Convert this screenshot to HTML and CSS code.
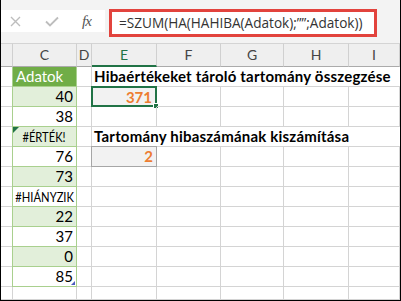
FILE: index.html
```html
<!DOCTYPE html>
<html lang="hu">
<head>
  <meta charset="UTF-8" />
  <title>HAHIBA összegzés</title>
  <link rel="stylesheet" href="styles.css">
</head>
<body>
  <div class="window">

    <!-- Formula bar -->
    <div class="formula-area">
      <div class="name-box">
        <span class="icon cancel">
          <svg width="11" height="11" viewBox="0 0 11 11"><path d="M1 1 L10 10 M10 1 L1 10" stroke="#bdbdbd" stroke-width="1.4" fill="none"/></svg>
        </span>
        <span class="icon enter">
          <svg width="14" height="11" viewBox="0 0 14 11"><path d="M1 5.5 L5 9.5 L13 1.5" stroke="#bdbdbd" stroke-width="1.8" fill="none"/></svg>
        </span>
        <span class="fx">fx</span>
      </div>
      <div class="formula">=SZUM(HA(HAHIBA(Adatok);””;Adatok))</div>
    </div>

    <!-- Sheet -->
    <div class="sheet">
      <div class="hd"></div>
      <div class="hd">C</div>
      <div class="hd">D</div>
      <div class="hd active">E</div>
      <div class="hd">F</div>
      <div class="hd">G</div>
      <div class="hd">H</div>
      <div class="hd">I</div>

      <div class="c rh"></div>
      <div class="c tbl th">Adatok</div>
      <div class="c"></div>
      <div class="c title">Hibaértékeket tároló tartomány összegzése</div>

      <div class="c rh"></div>
      <div class="c tbl band num">40</div>
      <div class="c"></div>
      <div class="c res selected">371<span class="handle"></span></div>
      <div class="c"></div><div class="c"></div><div class="c"></div><div class="c"></div>

      <div class="c rh"></div>
      <div class="c tbl num">38</div>
      <div class="c"></div><div class="c"></div><div class="c"></div><div class="c"></div><div class="c"></div><div class="c"></div>

      <div class="c rh"></div>
      <div class="c tbl band err flag"><span>#ÉRTÉK!</span></div>
      <div class="c"></div>
      <div class="c title">Tartomány hibaszámának kiszámítása</div>

      <div class="c rh"></div>
      <div class="c tbl num">76</div>
      <div class="c"></div>
      <div class="c res boxed">2</div>
      <div class="c"></div><div class="c"></div><div class="c"></div><div class="c"></div>

      <div class="c rh"></div>
      <div class="c tbl band num">73</div>
      <div class="c"></div><div class="c"></div><div class="c"></div><div class="c"></div><div class="c"></div><div class="c"></div>

      <div class="c rh"></div>
      <div class="c tbl err"><span>#HIÁNYZIK</span></div>
      <div class="c"></div><div class="c"></div><div class="c"></div><div class="c"></div><div class="c"></div><div class="c"></div>

      <div class="c rh"></div>
      <div class="c tbl band num">22</div>
      <div class="c"></div><div class="c"></div><div class="c"></div><div class="c"></div><div class="c"></div><div class="c"></div>

      <div class="c rh"></div>
      <div class="c tbl num">37</div>
      <div class="c"></div><div class="c"></div><div class="c"></div><div class="c"></div><div class="c"></div><div class="c"></div>

      <div class="c rh"></div>
      <div class="c tbl band num">0</div>
      <div class="c"></div><div class="c"></div><div class="c"></div><div class="c"></div><div class="c"></div><div class="c"></div>

      <div class="c rh"></div>
      <div class="c tbl num last">85<span class="resize"></span></div>
      <div class="c"></div><div class="c"></div><div class="c"></div><div class="c"></div><div class="c"></div><div class="c"></div>

      <div class="c rh"></div>
      <div class="c"></div><div class="c"></div><div class="c"></div><div class="c"></div><div class="c"></div><div class="c"></div><div class="c"></div>
    </div>

  </div>
</body>
</html>
```

FILE: styles.css
```css
* {
  margin: 0;
  padding: 0;
  box-sizing: border-box;
}

body {
  background: #fff;
  font-family: Lato, "Open Sans", sans-serif;
}

.window {
  width: 401px;
  height: 301px;
  border-left: 1px solid #000;
  border-right: 1px solid #000;
  border-bottom: 1px solid #000;
  overflow: hidden;
}

/* Formula bar */
.formula-area {
  height: 43px;
  background: #f3f3f3;
  display: flex;
  align-items: flex-start;
  padding-top: 10px;
  gap: 4px;
}

.name-box {
  width: 104px;
  height: 22px;
  background: #fff;
  display: flex;
  align-items: center;
}

.icon {
  display: flex;
}

.cancel {
  margin-left: 9px;
}

.enter {
  margin-left: 24px;
}

.fx {
  margin-left: 23px;
  font-family: "Liberation Serif", serif;
  font-style: italic;
  font-size: 15px;
  color: #555;
  letter-spacing: -1px;
}

.formula {
  width: 268px;
  height: 28px;
  margin-top: -1px;
  background: #fff;
  border: 3px solid #e2433d;
  padding-left: 7px;
  font-family: "Open Sans", sans-serif;
  font-size: 13.6px;
  line-height: 22px;
  color: #333;
  white-space: nowrap;
}

/* Sheet grid */
.sheet {
  display: grid;
  grid-template-columns: 12px 64px 15px 65px 64px 63px 65px 51px;
  grid-template-rows: 24px repeat(11, 20px) 13px;
  font-size: 15px;
  color: #000;
}

.hd {
  background: #efefef;
  border-top: 1px solid #d4d4d4;
  border-right: 1px solid #d0d0d0;
  border-bottom: 1px solid #ababab;
  text-align: center;
  line-height: 21px;
  font-size: 14px;
  color: #444;
}

.hd.active {
  color: #217346;
  border-bottom: 2px solid #217346;
}

.c {
  position: relative;
  border-right: 1px solid #d4d4d4;
  border-bottom: 1px solid #d4d4d4;
  line-height: 19px;
  white-space: nowrap;
  padding: 0 3px;
}

.c.rh {
  padding: 0;
}

/* Table in column C */
.tbl {
  border-right: 1px solid #a9d08e;
  border-bottom: 1px solid #a9d08e;
  border-left: 1px solid #a9d08e;
  margin-left: -1px;
}

.th {
  background: #70ad47;
  color: #fff;
  padding-left: 3px;
}

.band {
  background: #e2efda;
}

.num {
  text-align: right;
}

.err {
  display: flex;
  justify-content: center;
  padding: 0;
}

.err span {
  display: inline-block;
  font-size: 14px;
  transform: scaleX(0.8);
}

.flag::before {
  content: '';
  position: absolute;
  top: 0;
  left: 0;
  border-top: 6px solid #217346;
  border-right: 6px solid transparent;
}

.resize {
  position: absolute;
  right: 1px;
  bottom: 1px;
  border-bottom: 4px solid #4a5bbf;
  border-left: 4px solid transparent;
}

/* Headings spanning E:I */
.title {
  grid-column: span 5;
  border-right: none;
  font-weight: bold;
  padding-left: 2px;
  letter-spacing: 0.2px;
}

/* Result cells */
.res {
  background: #f2f2f2;
  text-align: right;
  font-weight: bold;
  color: #ed7d31;
}

.selected {
  border: 2px solid #217346;
  margin: -1px 0 0 -1px;
  line-height: 18px;
}

.handle {
  position: absolute;
  right: -4px;
  bottom: -4px;
  width: 6px;
  height: 6px;
  background: #217346;
  border: 1px solid #fff;
}

.boxed {
  border: 1px solid #a6a6a6;
  margin: -1px 0 0 -1px;
}
```
